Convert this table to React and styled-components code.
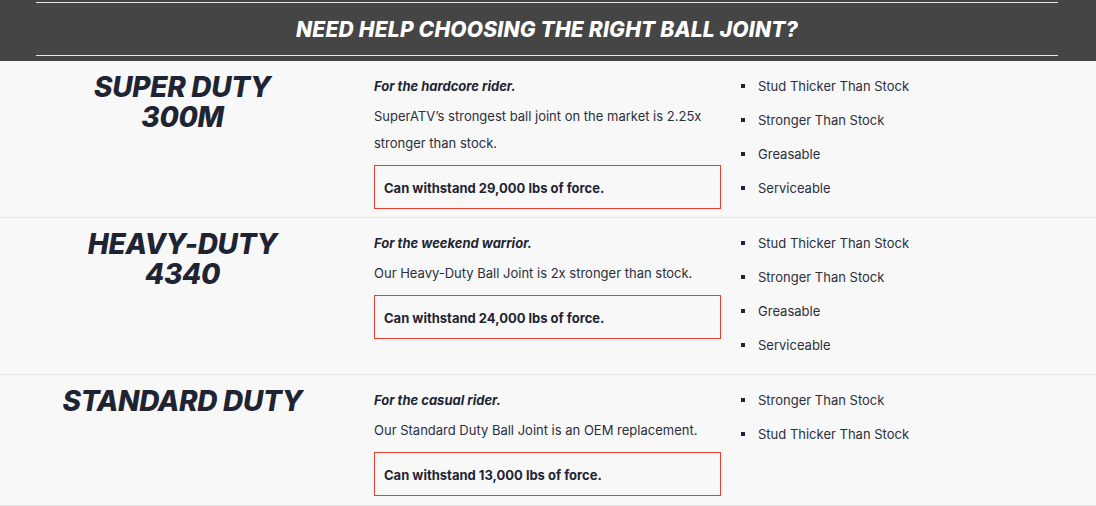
import React from 'react';
import styled, { createGlobalStyle } from 'styled-components';

const GlobalStyle = createGlobalStyle`
  html, body {
    margin: 0;
    padding: 0;
    background: #f8f8f8;
    font-family: Inter, "Open Sans", sans-serif;
    color: #2b2f3b;
  }
`;

const Header = styled.div`
  background: #454545;
  padding: 2px 38px 5px 36px;
`;

const HeaderInner = styled.div`
  border-top: 1px solid #e6e6e6;
  border-bottom: 1px solid #e6e6e6;
  height: 52px;
  display: flex;
  align-items: center;
  justify-content: center;
`;

const Title = styled.h2`
  margin: 0;
  color: #fff;
  font-size: 21px;
  font-weight: 800;
  font-style: italic;
  letter-spacing: 0.2px;
  text-transform: uppercase;
`;

const Row = styled.div`
  display: grid;
  grid-template-columns: 365px 365px 1fr;
  height: ${(p) => p.$height}px;
  border-bottom: 1px solid #e3e3e3;
  box-sizing: border-box;
`;

const Name = styled.div`
  text-align: center;
  font-size: 28px;
  line-height: 30px;
  font-weight: 800;
  font-style: italic;
  color: #1f2433;
  padding-top: 11px;
  letter-spacing: -0.3px;
`;

const Middle = styled.div`
  padding: 15px 9px 0 9px;
`;

const Lead = styled.p`
  margin: 0 0 7px;
  font-size: 13px;
  line-height: 20px;
  font-weight: 700;
  font-style: italic;
  color: #1f2433;
`;

const Desc = styled.p`
  margin: 0 0 8px;
  font-size: 13px;
  line-height: 27px;
  color: #2b2f3b;
`;

const ForceBox = styled.div`
  border: 1px solid #e8402f;
  height: 44px;
  box-sizing: border-box;
  display: flex;
  align-items: center;
  padding: 1px 9px 0;
  font-size: 13px;
  font-weight: 700;
  color: #1f2433;
`;

const Features = styled.ul`
  list-style: none;
  margin: 0;
  padding: 15px 0 0 11px;
`;

const Feature = styled.li`
  display: flex;
  align-items: center;
  height: 20px;
  margin-bottom: 14px;
  font-size: 13px;
  color: #2b2f3b;

  &::before {
    content: '';
    width: 4px;
    height: 4px;
    background: #1f2433;
    margin-right: 13px;
  }
`;

const joints = [
  {
    name: ['SUPER DUTY', '300M'],
    lead: 'For the hardcore rider.',
    desc: 'SuperATV’s strongest ball joint on the market is 2.25x stronger than stock.',
    force: '29,000',
    features: ['Stud Thicker Than Stock', 'Stronger Than Stock', 'Greasable', 'Serviceable'],
    height: 157,
  },
  {
    name: ['HEAVY-DUTY', '4340'],
    lead: 'For the weekend warrior.',
    desc: 'Our Heavy-Duty Ball Joint is 2x stronger than stock.',
    force: '24,000',
    features: ['Stud Thicker Than Stock', 'Stronger Than Stock', 'Greasable', 'Serviceable'],
    height: 157,
  },
  {
    name: ['STANDARD DUTY'],
    lead: 'For the casual rider.',
    desc: 'Our Standard Duty Ball Joint is an OEM replacement.',
    force: '13,000',
    features: ['Stronger Than Stock', 'Stud Thicker Than Stock'],
    height: 131,
  },
];

const App = () => {
  return (
    <>
      <GlobalStyle />
      <Header>
        <HeaderInner>
          <Title>Need help choosing the right ball joint?</Title>
        </HeaderInner>
      </Header>
      {joints.map((j) => (
        <Row key={j.force} $height={j.height}>
          <Name>
            {j.name.map((line) => (
              <div key={line}>{line}</div>
            ))}
          </Name>
          <Middle>
            <Lead>{j.lead}</Lead>
            <Desc>{j.desc}</Desc>
            <ForceBox>Can withstand {j.force} lbs of force.</ForceBox>
          </Middle>
          <Features>
            {j.features.map((f) => (
              <Feature key={f}>{f}</Feature>
            ))}
          </Features>
        </Row>
      ))}
    </>
  );
};

export default App;
